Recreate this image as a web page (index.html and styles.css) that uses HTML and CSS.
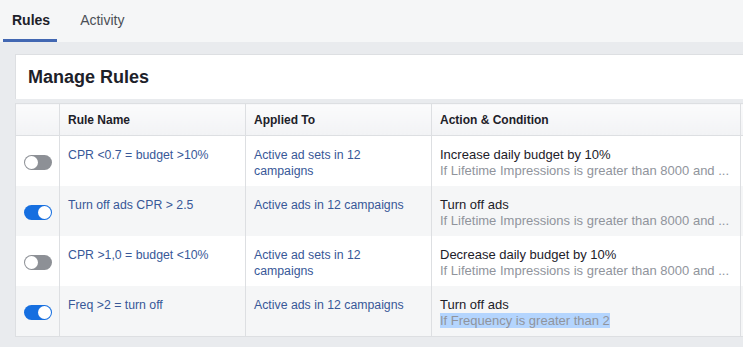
FILE: index.html
```html
<!DOCTYPE html>
<html>
<head>
  <title>Manage Rules</title>
  <link rel="stylesheet" href="styles.css">
</head>
<body>
  <div class="tabs">
    <div class="tab tab--active">Rules</div>
    <div class="tab">Activity</div>
  </div>

  <div class="page">
    <div class="card-head">
      <h1 class="card-title">Manage Rules</h1>
    </div>

    <table class="rules">
      <colgroup>
        <col class="col-toggle">
        <col class="col-name">
        <col class="col-applied">
        <col class="col-action">
        <col class="col-rest">
      </colgroup>
      <thead>
        <tr>
          <th></th>
          <th>Rule Name</th>
          <th>Applied To</th>
          <th>Action &amp; Condition</th>
          <th></th>
        </tr>
      </thead>
      <tbody>
        <tr>
          <td class="cell-toggle"><span class="switch"></span></td>
          <td><a class="link">CPR &lt;0.7 = budget &gt;10%</a></td>
          <td><a class="link">Active ad sets in 12 campaigns</a></td>
          <td class="cell-action">
            <div class="action">Increase daily budget by 10%</div>
            <div class="cond">If Lifetime Impressions is greater than 8000 and ...</div>
          </td>
          <td></td>
        </tr>
        <tr>
          <td class="cell-toggle"><span class="switch switch--on"></span></td>
          <td><a class="link">Turn off ads CPR &gt; 2.5</a></td>
          <td><a class="link">Active ads in 12 campaigns</a></td>
          <td class="cell-action">
            <div class="action">Turn off ads</div>
            <div class="cond">If Lifetime Impressions is greater than 8000 and ...</div>
          </td>
          <td></td>
        </tr>
        <tr>
          <td class="cell-toggle"><span class="switch"></span></td>
          <td><a class="link">CPR &gt;1,0 = budget &lt;10%</a></td>
          <td><a class="link">Active ad sets in 12 campaigns</a></td>
          <td class="cell-action">
            <div class="action">Decrease daily budget by 10%</div>
            <div class="cond">If Lifetime Impressions is greater than 8000 and ...</div>
          </td>
          <td></td>
        </tr>
        <tr>
          <td class="cell-toggle"><span class="switch switch--on"></span></td>
          <td><a class="link">Freq &gt;2 = turn off</a></td>
          <td><a class="link">Active ads in 12 campaigns</a></td>
          <td class="cell-action">
            <div class="action">Turn off ads</div>
            <div class="cond"><span class="selected">If Frequency is greater than 2</span></div>
          </td>
          <td></td>
        </tr>
      </tbody>
    </table>
  </div>
</body>
</html>
```

FILE: styles.css
```css
body {
    margin: 0;
    width: 743px;
    height: 347px;
    overflow: hidden;
    background: #e9ebee;
    font-family: 'Liberation Sans', Arial, sans-serif;
    color: #1d2129;
}

/* tabs */
.tabs {
    display: flex;
    gap: 7px;
    height: 42px;
    padding-left: 3px;
    background: #f5f6f7;
}

.tab {
    padding: 0 9px 0 16px;
    line-height: 41px;
    font-size: 14px;
    color: #4b4f56;
}

.tab--active {
    padding: 0 7px 0 9px;
    font-weight: bold;
    color: #1d2129;
    border-bottom: 3px solid #4267b2;
    line-height: 40px;
}

/* page */
.page {
    padding: 12px 0 0 15px;
    width: 800px;
}

.card-head {
    background: #fff;
    border: 1px solid #dddfe2;
    border-bottom: none;
    height: 44px;
    display: flex;
    align-items: center;
    padding-left: 12px;
    margin-bottom: 4px;
}

.card-title {
    margin: 0;
    font-size: 18px;
    font-weight: bold;
    color: #1d2129;
}

/* table */
.rules {
    border-collapse: collapse;
    width: 786px;
    font-size: 12.3px;
    line-height: 16px;
    table-layout: fixed;
}

.col-toggle { width: 44px; }
.col-name { width: 186px; }
.col-applied { width: 186px; }
.col-action { width: 309px; }

.rules th {
    height: 31px;
    padding: 0 8px;
    text-align: left;
    font-size: 12px;
    font-weight: bold;
    background: linear-gradient(#fbfbfc, #f2f3f5);
    border: 1px solid #dddfe2;
}

.rules td {
    height: 32px;
    padding: 11px 8px 7px;
    vertical-align: top;
    border-left: 1px solid #dddfe2;
    border-right: 1px solid #dddfe2;
}

.rules tbody tr:nth-child(odd) { background: #fff; }
.rules tbody tr:nth-child(even) { background: #f5f6f7; }
.rules tbody tr:last-child td { border-bottom: 1px solid #dddfe2; }

.rules td.cell-toggle {
    vertical-align: middle;
    padding: 2px 0 0 8px;
}

.rules td.cell-action {
    font-size: 13px;
    white-space: nowrap;
}

.link {
    color: #385898;
    text-decoration: none;
}

.action { color: #1d2129; }
.cond { color: #90949c; }
.selected { background: #b4d5fe; }

/* switch */
.switch {
    display: block;
    position: relative;
    width: 28px;
    height: 15px;
    border-radius: 8px;
    background: #8d9096;
}

.switch::after {
    content: '';
    position: absolute;
    top: 1px;
    left: 1px;
    width: 13px;
    height: 13px;
    border-radius: 50%;
    background: #fff;
}

.switch--on { background: #166fe0; }
.switch--on::after { left: 14px; }
```
